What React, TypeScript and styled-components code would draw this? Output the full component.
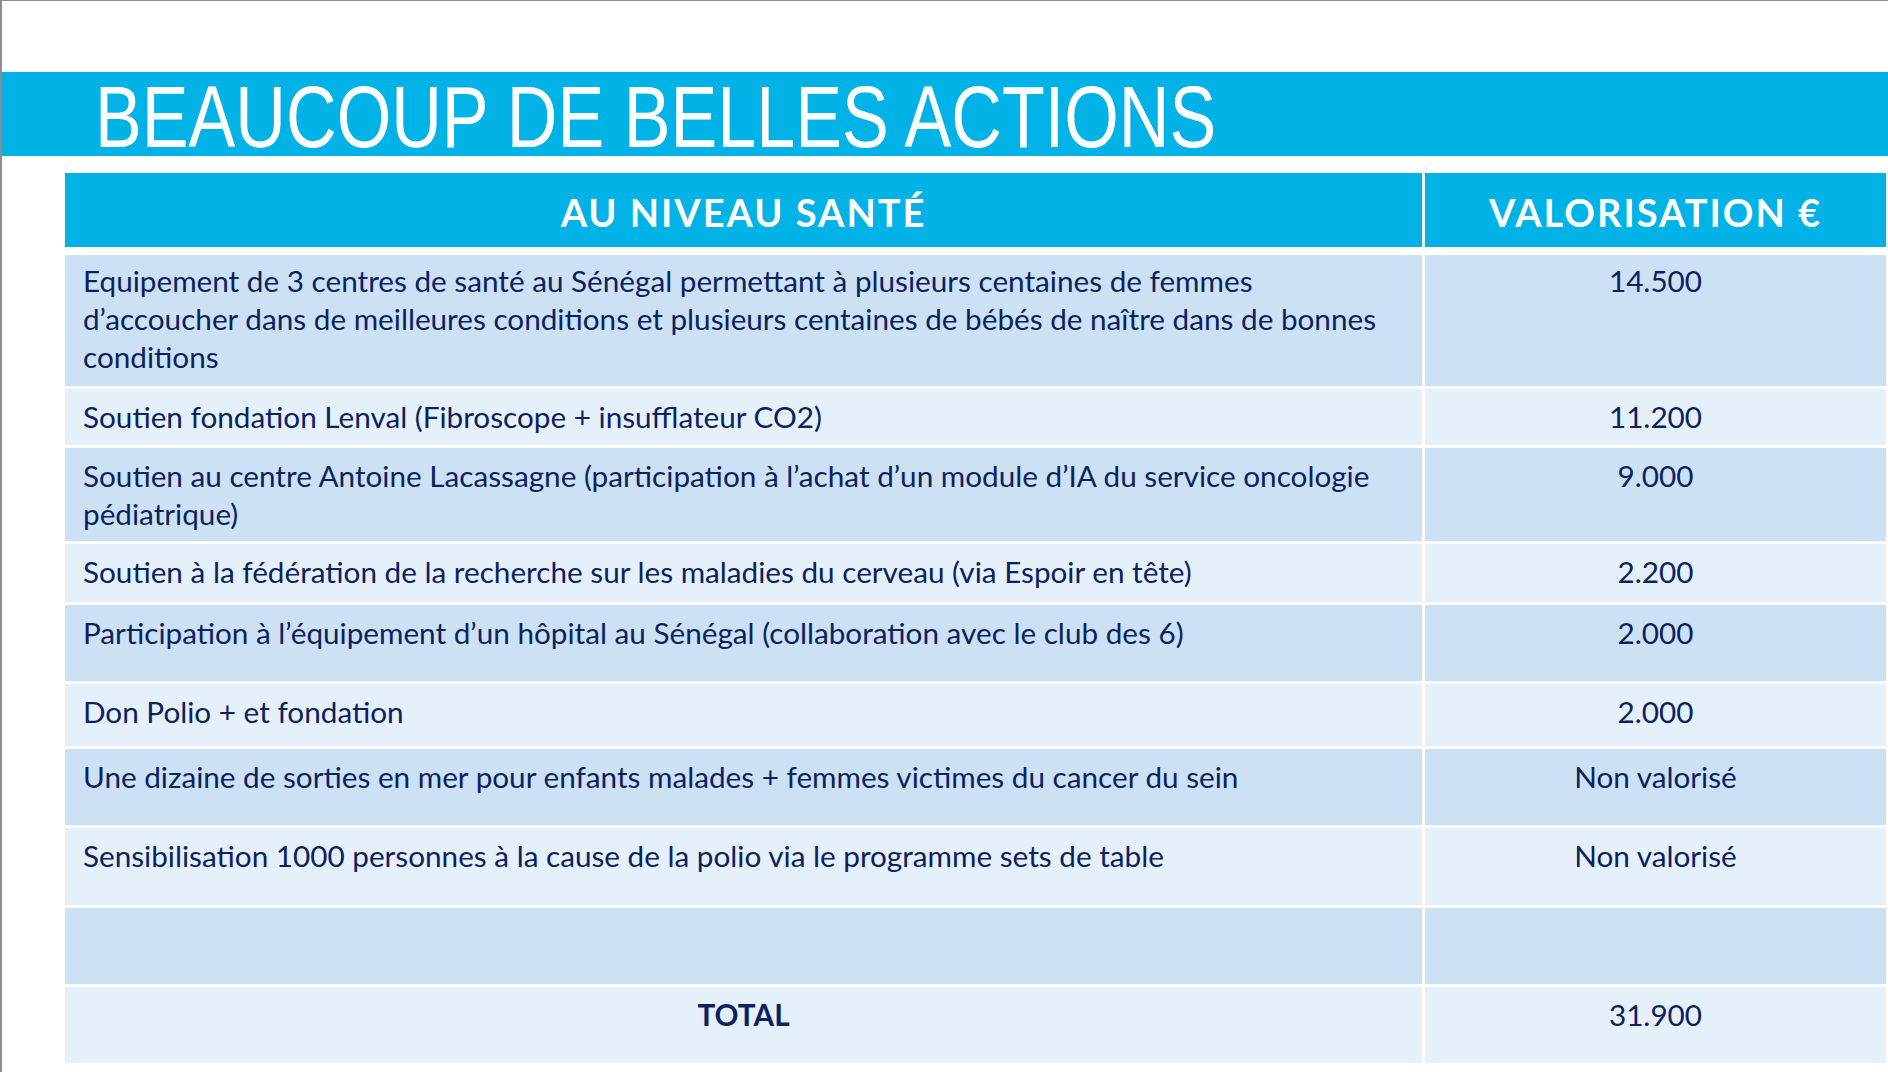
import React from "react";
import styled, { createGlobalStyle } from "styled-components";

// Slide colours
const CYAN = "#00B2E6";
const ROW_DARK = "#CCE2F4";
const ROW_LIGHT = "#E6F0FA";
const NAVY = "#0B2160";

const GlobalStyle = createGlobalStyle`
  html, body {
    margin: 0;
    padding: 0;
    background: #ffffff;
  }
`;

const Slide = styled.div`
  width: 1888px;
  height: 1072px;
  box-sizing: border-box;
  padding-top: 71px;
  border-top: 1px solid #8c8c8c;
  border-left: 2px solid #8c8c8c;
  background: #ffffff;
  overflow: hidden;
  display: flex;
  flex-direction: column;
`;

const Banner = styled.div`
  height: 84px;
  box-sizing: border-box;
  padding: 6px 0 0 93px;
  background: ${CYAN};
`;

const Title = styled.h1`
  display: inline-block;
  margin: 0;
  font-family: "Liberation Sans", Arial, sans-serif;
  font-weight: 400;
  font-size: 88px;
  line-height: 78px;
  color: #ffffff;
  white-space: nowrap;
  transform: scaleX(0.797);
  transform-origin: left center;
`;

const Table = styled.div`
  margin: 17px 0 0 63px;
  width: 1821px;
  display: flex;
  flex-direction: column;
  gap: 3px;
`;

const Row = styled.div<{ $head?: boolean }>`
  display: grid;
  grid-template-columns: 1357px 461px;
  column-gap: 3px;
  margin-bottom: ${($) => ($.$head ? 5 : 0)}px;
`;

const HeadCell = styled.div`
  height: 74px;
  background: ${CYAN};
  display: flex;
  align-items: center;
  justify-content: center;
  padding-top: 3px;
  box-sizing: border-box;
  font-family: Lato, "Open Sans", sans-serif;
  font-weight: 700;
  font-size: 38px;
  letter-spacing: 2px;
  color: #ffffff;
  white-space: nowrap;
`;

const Cell = styled.div<{ $h: number; $dark: boolean; $center?: boolean; $bold?: boolean }>`
  height: ${($) => $.$h}px;
  box-sizing: border-box;
  padding: ${($) => ($.$h > 120 ? 7 : 9)}px 18px 0 18px;
  background: ${($) => ($.$dark ? ROW_DARK : ROW_LIGHT)};
  font-family: Lato, "Open Sans", sans-serif;
  font-size: 29.7px;
  line-height: 38px;
  font-weight: ${($) => ($.$bold ? 700 : 400)};
  color: ${NAVY};
  text-align: ${($) => ($.$center ? "center" : "left")};
  white-space: nowrap;
`;

type Action = {
  label: React.ReactNode;
  value: string;
  h: number;
};

const actions: Action[] = [
  {
    label: (
      <>
        Equipement de 3 centres de santé au Sénégal permettant à plusieurs centaines de femmes
        <br />
        d’accoucher dans de meilleures conditions et plusieurs centaines de bébés de naître dans de bonnes
        <br />
        conditions
      </>
    ),
    value: "14.500",
    h: 131,
  },
  { label: "Soutien fondation Lenval (Fibroscope + insufflateur CO2)", value: "11.200", h: 56 },
  {
    label: (
      <>
        Soutien au centre Antoine Lacassagne (participation à l’achat d’un module d’IA du service oncologie
        <br />
        pédiatrique)
      </>
    ),
    value: "9.000",
    h: 93,
  },
  {
    label: "Soutien à la fédération de la recherche sur les maladies du cerveau (via Espoir en tête)",
    value: "2.200",
    h: 58,
  },
  {
    label: "Participation à l’équipement d’un hôpital au Sénégal (collaboration avec le club des 6)",
    value: "2.000",
    h: 76,
  },
  { label: "Don Polio + et fondation", value: "2.000", h: 62 },
  {
    label: "Une dizaine de sorties en mer pour enfants malades + femmes victimes du cancer du sein",
    value: "Non valorisé",
    h: 76,
  },
  {
    label: "Sensibilisation 1000 personnes à la cause de la polio via le programme sets de table",
    value: "Non valorisé",
    h: 77,
  },
  { label: "", value: "", h: 76 },
];

export default function App() {
  return (
    <>
      <GlobalStyle />
      <Slide>
        <Banner>
          <Title>BEAUCOUP DE BELLES ACTIONS</Title>
        </Banner>
        <Table>
          <Row $head>
            <HeadCell>AU NIVEAU SANTÉ</HeadCell>
            <HeadCell>VALORISATION €</HeadCell>
          </Row>
          {actions.map((a, i) => (
            <Row key={i}>
              <Cell $h={a.h} $dark={i % 2 === 0}>
                {a.label}
              </Cell>
              <Cell $h={a.h} $dark={i % 2 === 0} $center>
                {a.value}
              </Cell>
            </Row>
          ))}
          <Row>
            <Cell $h={76} $dark={false} $center $bold>
              TOTAL
            </Cell>
            <Cell $h={76} $dark={false} $center>
              31.900
            </Cell>
          </Row>
        </Table>
      </Slide>
    </>
  );
}
